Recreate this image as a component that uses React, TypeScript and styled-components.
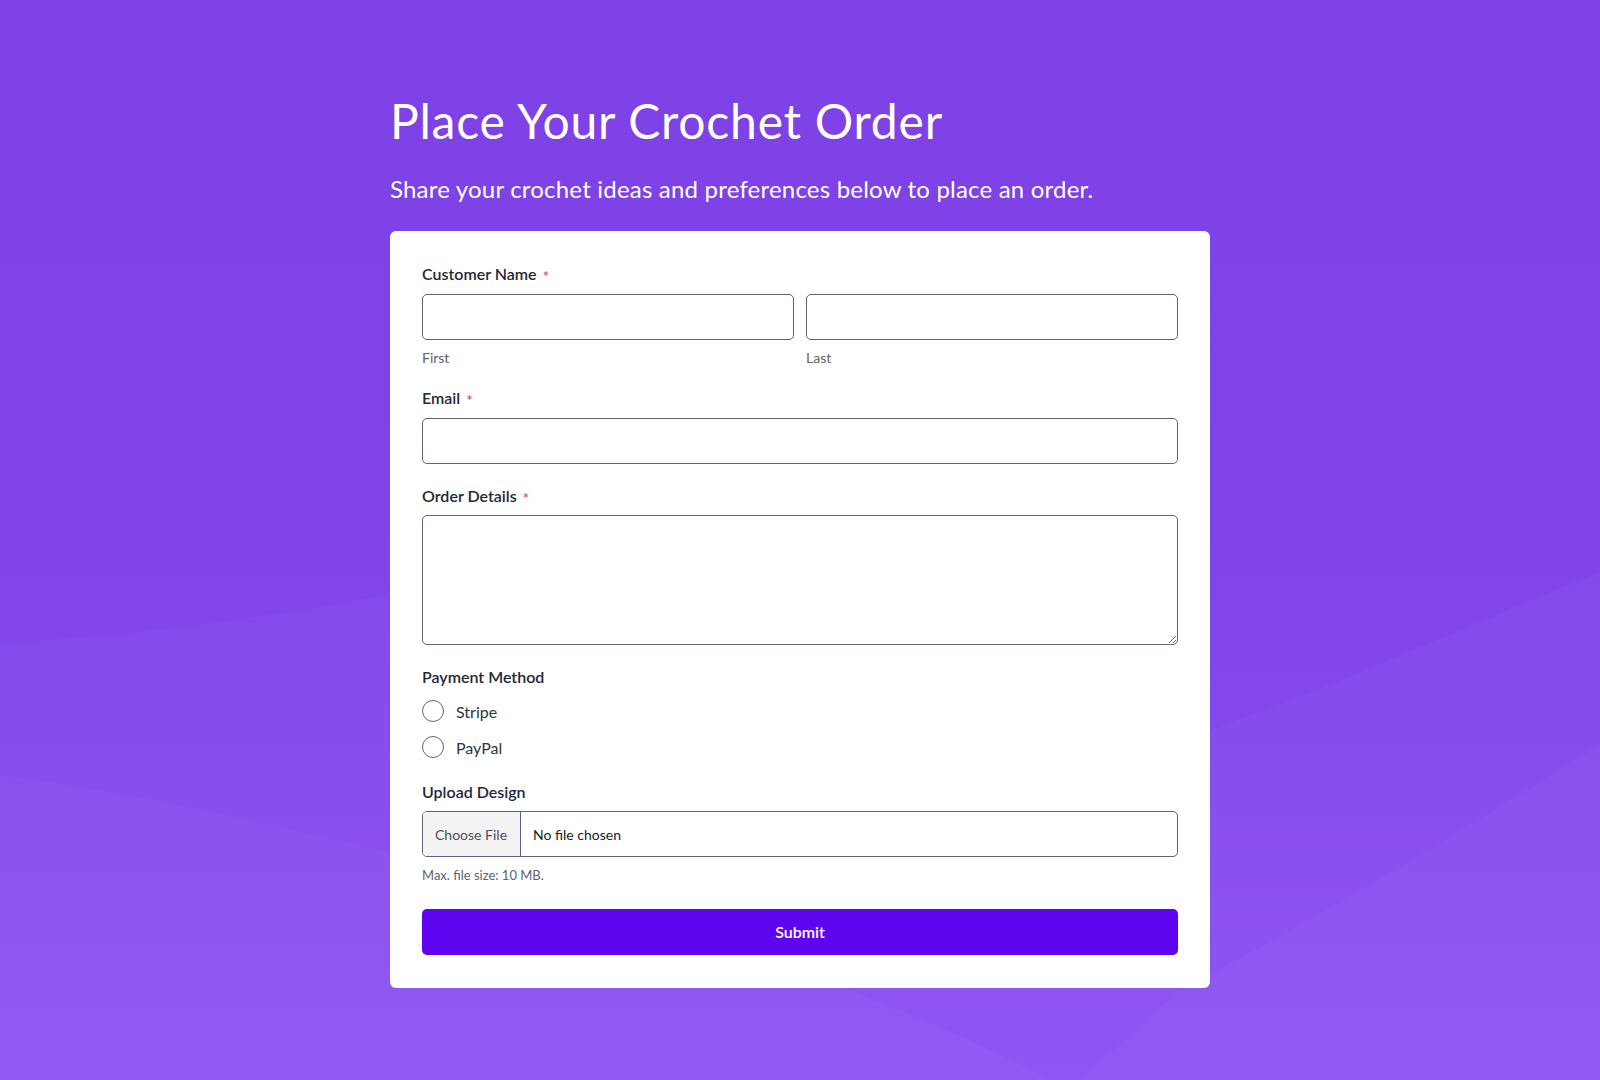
import React from 'react';
import styled, { createGlobalStyle } from 'styled-components';

const GlobalStyle = createGlobalStyle`
  html, body {
    margin: 0;
    padding: 0;
  }
  body {
    font-family: Lato, "Open Sans", "Liberation Sans", sans-serif;
    background: #7e43e6;
  }
  * {
    box-sizing: border-box;
  }
`

const Page = styled.main`
  position: relative;
  min-height: 1080px;
  overflow: hidden;
  background: linear-gradient(180deg, #7d41e5 0%, #7f43e7 45%, #8548ed 70%, #8d51f4 100%);
`

const Waves = styled.svg`
  position: absolute;
  inset: 0;
  width: 100%;
  height: 100%;
  pointer-events: none;
`

const Content = styled.div`
  position: relative;
  width: 820px;
  margin: 0 auto;
  padding-top: 92px;
  padding-bottom: 92px;
`

const Title = styled.h1`
  margin: 0;
  font-size: 48px;
  font-weight: 400;
  letter-spacing: 0.8px;
  line-height: 1.2;
  color: #ffffff;
`

const Subtitle = styled.p`
  margin: 25px 0 28px;
  font-size: 24px;
  letter-spacing: 0.2px;
  line-height: 1.2;
  color: #ffffff;
`

const Card = styled.form`
  background: #ffffff;
  border-radius: 6px;
  padding: 33px 32px 33px;
  display: flex;
  flex-direction: column;
`

const Field = styled.div<{ $gap?: number }>`
  display: flex;
  flex-direction: column;
  margin-bottom: ${p => p.$gap ?? 22}px;
`

const Label = styled.label`
  font-size: 16px;
  line-height: 1.2;
  font-weight: 600;
  color: #1d2838;
  margin-bottom: 10px;
`

const Required = styled.span`
  color: #d63637;
  font-size: 15px;
  font-weight: 400;
  line-height: 0;
  margin-left: 6px;
  vertical-align: -2px;
`

const NameRow = styled.div`
  display: grid;
  grid-template-columns: 1fr 1fr;
  column-gap: 12px;
`

const Column = styled.div`
  display: flex;
  flex-direction: column;
`

const TextInput = styled.input`
  height: 46px;
  width: 100%;
  border: 1px solid #5f6573;
  border-radius: 5px;
  padding: 0 12px;
  font-family: inherit;
  font-size: 16px;
  color: #1d2838;
  background: #fff;
  outline: none;
`

const TextArea = styled.textarea`
  height: 130px;
  width: 100%;
  border: 1px solid #5f6573;
  border-radius: 5px;
  padding: 10px 12px;
  font-family: inherit;
  font-size: 16px;
  color: #1d2838;
  resize: vertical;
  outline: none;
  display: block;
`

const SubLabel = styled.span`
  margin-top: 10px;
  font-size: 14px;
  line-height: 1.2;
  color: #5d6470;
`

const RadioList = styled.div`
  display: flex;
  flex-direction: column;
  gap: 13px;
  margin-top: 4px;
`

const RadioOption = styled.label`
  display: flex;
  align-items: center;
  gap: 12px;
  font-size: 16px;
  color: #2d3544;
  line-height: 23px;
  cursor: pointer;
`

const RadioInput = styled.input`
  appearance: none;
  margin: 0;
  width: 22px;
  height: 22px;
  border-radius: 50%;
  border: 1px solid #5f6573;
  background: #fff;
  flex-shrink: 0;
`

const FileBox = styled.label`
  display: flex;
  height: 46px;
  border: 1px solid #5f6573;
  border-radius: 5px;
  overflow: hidden;
  cursor: pointer;
`

const FileButton = styled.span`
  display: flex;
  align-items: center;
  padding: 0 12px;
  width: 98px;
  background: #f3f3f3;
  border-right: 1px solid #5f6573;
  font-size: 14px;
  color: #4b505c;
  white-space: nowrap;
`

const FileName = styled.span`
  display: flex;
  align-items: center;
  padding: 0 12px;
  font-size: 14px;
  color: #1a1a1a;
`

const Hint = styled.span`
  margin-top: 11px;
  font-size: 13px;
  line-height: 1.2;
  color: #5d6470;
`

const SubmitButton = styled.button`
  height: 46px;
  width: 100%;
  border: none;
  border-radius: 5px;
  background: #5d05ef;
  color: #ffffff;
  font-family: inherit;
  font-size: 16px;
  font-weight: 600;
  cursor: pointer;
`

const App = () => {
  return (
    <>
      <GlobalStyle />
      <Page>
        <Waves viewBox="0 0 1600 1080" preserveAspectRatio="none">
          <path d="M0,644 C220,628 330,606 420,588 L1180,600 L1210,730 C1350,680 1480,620 1600,572 L1600,1080 L0,1080 Z" fill="#ffffff" opacity="0.03" />
          <path d="M0,775 C180,800 300,830 420,860 C700,930 900,1000 1050,1080 L0,1080 Z" fill="#ffffff" opacity="0.025" />
          <path d="M1180,990 C1350,900 1480,820 1600,744 L1600,1080 L1080,1080 Z" fill="#ffffff" opacity="0.025" />
        </Waves>
        <Content>
          <Title>Place Your Crochet Order</Title>
          <Subtitle>Share your crochet ideas and preferences below to place an order.</Subtitle>
          <Card onSubmit={e => e.preventDefault()}>
            <Field>
              <Label>Customer Name<Required>*</Required></Label>
              <NameRow>
                <Column>
                  <TextInput type="text" aria-label="First" />
                  <SubLabel>First</SubLabel>
                </Column>
                <Column>
                  <TextInput type="text" aria-label="Last" />
                  <SubLabel>Last</SubLabel>
                </Column>
              </NameRow>
            </Field>
            <Field>
              <Label>Email<Required>*</Required></Label>
              <TextInput type="email" />
            </Field>
            <Field>
              <Label>Order Details<Required>*</Required></Label>
              <TextArea />
            </Field>
            <Field $gap={23}>
              <Label>Payment Method</Label>
              <RadioList>
                <RadioOption>
                  <RadioInput type="radio" name="payment" value="stripe" />
                  Stripe
                </RadioOption>
                <RadioOption>
                  <RadioInput type="radio" name="payment" value="paypal" />
                  PayPal
                </RadioOption>
              </RadioList>
            </Field>
            <Field $gap={25}>
              <Label>Upload Design</Label>
              <FileBox>
                <FileButton>Choose File</FileButton>
                <FileName>No file chosen</FileName>
              </FileBox>
              <Hint>Max. file size: 10 MB.</Hint>
            </Field>
            <SubmitButton type="submit">Submit</SubmitButton>
          </Card>
        </Content>
      </Page>
    </>
  );
}

export default App;
